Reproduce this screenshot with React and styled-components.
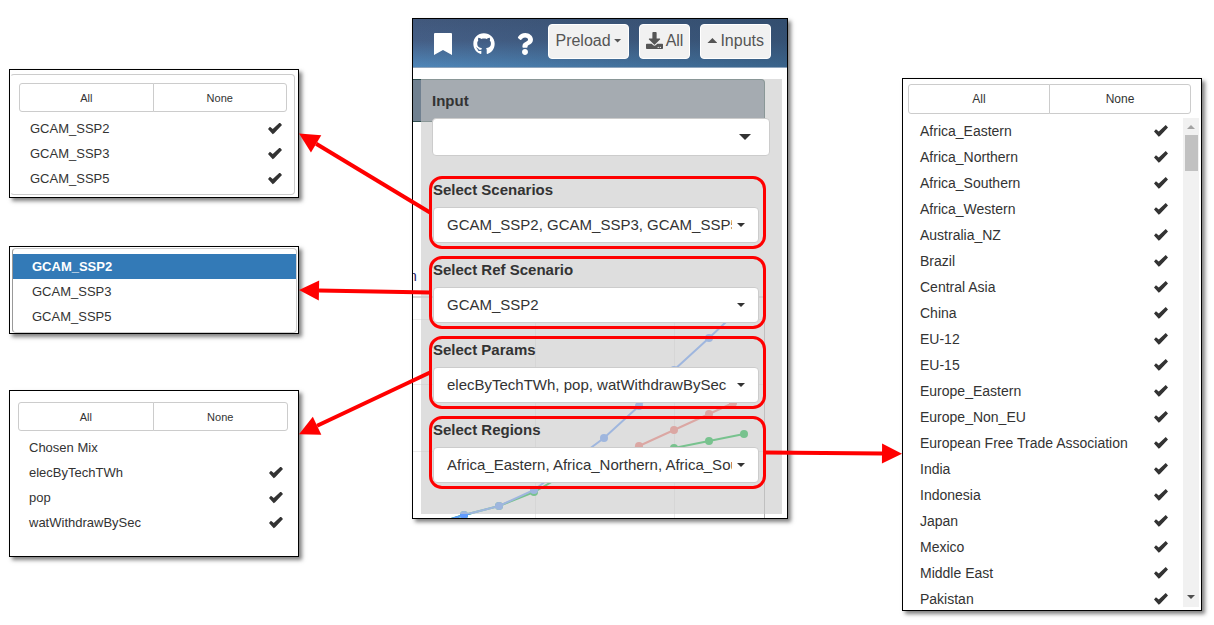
import React, { useLayoutEffect, useRef, useState } from 'react';
import styled, { createGlobalStyle, css } from 'styled-components';
import { FaGithub, FaQuestion, FaDownload } from 'react-icons/fa';

const GlobalStyle = createGlobalStyle`
  *, *::before, *::after { box-sizing: border-box; }
  body {
    margin: 0;
    background: #fff;
    color: #333;
    font: 14px/20px "Liberation Sans", Arial, sans-serif;
  }
  button, select, input { font: inherit; color: inherit; margin: 0; }
`;

const Figure = styled.main`
  position: relative;
  display: grid;
  grid-template-columns: 290fr 113px 376fr 114px 300fr;
  align-items: start;
  padding: 18px 12px 14px 9px;
  overflow: hidden;
`;

const LeftColumn = styled.div`
  grid-column: 1;
  display: flex;
  flex-direction: column;
  padding-top: 51px;
`;

const Window = styled.section`
  min-width: 0;
  background: #fff;
  border: 1px solid #000;
  box-shadow: 3px 3px 4px rgba(0, 0, 0, 0.5);
`;

const ScenarioWindow = styled(Window)`
  padding: 4px 3px 2px 0;
  margin-bottom: 48px;
`;

const RefWindow = styled(Window)`
  padding: 1px 1px 0 2px;
  margin-bottom: 56px;
`;

const ParamWindow = styled(Window)`
  padding: 11px 3px 21px 0;
`;

const RegionWindow = styled(Window)`
  grid-column: 5;
  margin-top: 60px;
  padding: 5px 2px 3px 0;
`;

const AppWindow = styled(Window)`
  grid-column: 3;
`;

const Menu = styled.div`
  ${(p) => p.$framed && css`
    border: 1px solid #ccc;
    border-left-color: ${p.$framed === 'full' ? '#999' : 'transparent'};
    border-radius: 4px;
    padding: ${p.$framed === 'full' ? '5px 0 3px' : '8px 0 3px'};
  `}
`;

const ButtonPair = styled.div`
  display: flex;
  margin: ${(p) => (p.$large ? '0 8px 4px 5px' : '0 7px 4px 8px')};
`;

const PairButton = styled.button`
  flex: 1;
  height: ${(p) => (p.$large ? 30 : 29)}px;
  padding: 0;
  background: #fff;
  border: 1px solid #ccc;
  font-size: ${(p) => (p.$large ? 12 : 11)}px;
  &:first-child { border-radius: 3px 0 0 3px; }
  &:last-child { border-radius: 0 3px 3px 0; margin-left: -1px; }
`;

const Option = styled.label`
  display: flex;
  align-items: center;
  justify-content: space-between;
  height: ${(p) => (p.$large ? 26 : 25)}px;
  padding: ${(p) => (p.$large ? '0 15px 0 17px' : '0 12px 0 19px')};
  font-size: ${(p) => (p.$large ? 14 : 13)}px;
  white-space: nowrap;
`;

const Check = styled.input`
  appearance: none;
  flex: none;
  width: 14px;
  height: 12px;
  background: transparent;
  clip-path: polygon(0 54%, 14% 36%, 34% 54%, 84% 0, 100% 20%, 44% 90%, 34% 98%);
  &:checked { background: #333; }
`;

const RefOption = styled(Option)`
  &:has(input:checked) {
    background: #337ab7;
    color: #fff;
    font-weight: bold;
  }
`;

const HiddenRadio = styled.input`
  appearance: none;
  width: 1px;
  height: 1px;
`;

const ScrollArea = styled.div`
  display: flex;
  height: 489px;
`;

const RegionList = styled.div`
  flex: 1;
  min-width: 0;
  overflow: hidden;
`;

const ScrollTrack = styled.div`
  display: flex;
  flex-direction: column;
  align-items: center;
  width: 16px;
  padding: 7px 0 8px;
  background: #f1f1f1;
`;

const ScrollThumb = styled.div`
  width: 13px;
  height: 36px;
  margin-top: 6px;
  margin-bottom: auto;
  background: #c1c1c1;
`;

const caretSizes = {
  small: css`width: 8px; height: 4px;`,
  medium: css`width: 10px; height: 5px;`,
  large: css`width: 12px; height: 6px;`,
};

const Caret = styled.span`
  ${(p) => caretSizes[p.$size || 'medium']}
  background: ${(p) => p.$color || '#333'};
  clip-path: ${(p) => (p.$up ? 'polygon(50% 0, 100% 100%, 0 100%)' : 'polygon(0 0, 100% 0, 50% 100%)')};
`;

const TopBar = styled.header`
  display: flex;
  align-items: flex-start;
  justify-content: space-between;
  height: 49px;
  padding: 5px 16px 0 19px;
  background:
    linear-gradient(to right, rgba(40, 70, 100, 0), rgba(40, 70, 100, 0.55)),
    linear-gradient(to bottom, #41587c 0%, #455f86 45%, #4f86b8 100%);
  border-bottom: 1px solid #8fa5bd;
`;

const IconNav = styled.nav`
  display: flex;
  align-items: center;
  gap: 19px;
  height: 39px;
`;

const IconLink = styled.a`
  display: flex;
  justify-content: center;
  width: 22px;
  color: #fff;
`;

const Tools = styled.div`
  display: flex;
  gap: 10px;
`;

const ToolButton = styled.button`
  display: flex;
  align-items: center;
  gap: 3px;
  height: 35px;
  padding: 0 6px 2px;
  border: 1px solid #fff;
  border-radius: 4px;
  background: #f1f1f1;
  color: #555;
  font-size: 16px;
`;

const Body = styled.div`
  position: relative;
  padding: 11px 5px 4px 8px;
  overflow: hidden;
`;

const TitleStrip = styled.div`
  position: absolute;
  top: 11px;
  left: 0;
  right: 22px;
  height: 43px;
  background: #708090;
  border: 1px solid #2f4f4f;
  border-left: 0;
  border-top-right-radius: 4px;
`;

const Chart = styled.svg`
  position: absolute;
  inset: 0;
  width: 100%;
  height: 100%;
`;

const InputPanel = styled.div`
  position: relative;
  padding: 12px 16px 25px 8px;
  background: rgba(200, 200, 200, 0.6);
`;

const FieldLabel = styled.label`
  display: block;
  font-size: 15px;
  font-weight: bold;
`;

const SelectBox = styled.div`
  position: relative;
  display: flex;
  align-items: center;
  margin-top: 7px;
`;

const Select = styled.select`
  appearance: none;
  width: 100%;
  height: ${(p) => (p.$big ? 38 : 36)}px;
  padding: 0 26px 0 13px;
  background: #fff;
  border: 1px solid #ccc;
  border-radius: 4px;
  font-size: 15px;
`;

const CaretSlot = styled.span`
  position: absolute;
  right: ${(p) => (p.$big ? 19 : 14)}px;
  display: flex;
  pointer-events: none;
`;

const SourceField = styled.div`
  margin: 0 -4px 20px 3px;
`;

const Fields = styled.div`
  display: flex;
  flex-direction: column;
  gap: 7px;
`;

const Field = styled.div`
  padding: 1px 4px 3px 1px;
  border: 3px solid #f00;
  border-radius: 13px;
`;

const ArrowLayer = styled.svg`
  position: absolute;
  inset: 0;
  width: 100%;
  height: 100%;
  pointer-events: none;
`;

const scenarios = ['GCAM_SSP2', 'GCAM_SSP3', 'GCAM_SSP5'];
const params = [
  ['Chosen Mix', false],
  ['elecByTechTWh', true],
  ['pop', true],
  ['watWithdrawBySec', true],
];
const regions = [
  'Africa_Eastern', 'Africa_Northern', 'Africa_Southern', 'Africa_Western',
  'Australia_NZ', 'Brazil', 'Central Asia', 'China', 'EU-12', 'EU-15',
  'Europe_Eastern', 'Europe_Non_EU', 'European Free Trade Association',
  'India', 'Indonesia', 'Japan', 'Mexico', 'Middle East', 'Pakistan',
];

const fields = [
  { id: 'scenarios', label: 'Select Scenarios', value: 'GCAM_SSP2, GCAM_SSP3, GCAM_SSP5' },
  { id: 'reference', label: 'Select Ref Scenario', value: 'GCAM_SSP2' },
  { id: 'params', label: 'Select Params', value: 'elecByTechTWh, pop, watWithdrawBySec' },
  { id: 'regions', label: 'Select Regions', value: 'Africa_Eastern, Africa_Northern, Africa_Southern' },
];

// Each arrow runs from a field to its window; `at` is the height on the window's edge.
const links = [
  { id: 'scenarios', at: 0.5, side: 'left' },
  { id: 'reference', at: 0.5, side: 'left' },
  { id: 'params', at: 0.265, side: 'left' },
  { id: 'regions', at: 0.705, side: 'right' },
];

function Arrow({ x1, y1, x2, y2 }) {
  const length = Math.hypot(x2 - x1, y2 - y1);
  const ux = (x2 - x1) / length;
  const uy = (y2 - y1) / length;
  const bx = x2 - ux * 20;
  const by = y2 - uy * 20;
  return (
    <g fill="#f00" stroke="#f00">
      <line x1={x1} y1={y1} x2={bx} y2={by} strokeWidth="4" />
      <polygon
        stroke="none"
        points={`${x2},${y2} ${bx - uy * 10},${by + ux * 10} ${bx + uy * 10},${by - ux * 10}`}
      />
    </g>
  );
}

function useArrowLines(root, nodes) {
  const [lines, setLines] = useState([]);
  useLayoutEffect(() => {
    const measure = () => {
      const base = root.current.getBoundingClientRect();
      setLines(
        links.map(({ id, at, side }) => {
          const from = nodes.current[`field-${id}`].getBoundingClientRect();
          const to = nodes.current[`window-${id}`].getBoundingClientRect();
          const left = side === 'left';
          return {
            id,
            x1: (left ? from.left + 1 : from.right - 1) - base.left,
            y1: from.top + from.height / 2 - base.top,
            x2: (left ? to.right : to.left) - base.left,
            y2: to.top + to.height * at - base.top,
          };
        })
      );
    };
    measure();
    const observer = new ResizeObserver(measure);
    observer.observe(root.current);
    return () => observer.disconnect();
  }, [root, nodes]);
  return lines;
}

function AllNone({ large }) {
  return (
    <ButtonPair $large={large}>
      <PairButton type="button" $large={large}>All</PairButton>
      <PairButton type="button" $large={large}>None</PairButton>
    </ButtonPair>
  );
}

function CheckOption({ label, checked = true, large }) {
  return (
    <Option $large={large}>
      {label}
      <Check type="checkbox" defaultChecked={checked} />
    </Option>
  );
}

function Series({ color, points }) {
  return (
    <g fill={color} stroke={color}>
      <polyline points={points.map((p) => p.join(',')).join(' ')} fill="none" strokeWidth="2" />
      {points.slice(1).map(([x, y]) => <circle key={x} cx={x} cy={y} r="4" stroke="none" />)}
    </g>
  );
}

function BackgroundChart() {
  return (
    <Chart viewBox="0 0 374 450" preserveAspectRatio="none" aria-hidden="true">
      <g stroke="#ebebeb">
        <path d="M0 251.5H351M0 316.5H351M0 383.5H351M122.5 229V450M261.5 229V450" fill="none" />
      </g>
      <path d="M0 229H351.500V450" fill="none" stroke="#b3b3b3" />
      <text x="-4" y="213" fontSize="14" fill="#1b1464">n</text>
      <Series color="#F8766D" points={[[156, 412], [191, 394], [226, 378], [261, 362], [296, 346], [320, 335]]} />
      <Series color="#00BA38" points={[[38, 451], [51, 447], [86, 438], [121, 424], [156, 404], [191, 392], [226, 385], [261, 380], [296, 373], [331, 366]]} />
      <Series color="#619CFF" points={[[38, 451], [51, 447], [86, 438], [121, 422], [156, 396], [191, 370], [226, 338], [261, 302], [296, 270], [331, 237]]} />
    </Chart>
  );
}

export default function App() {
  const root = useRef(null);
  const nodes = useRef({});
  const lines = useArrowLines(root, nodes);
  const track = (key) => (el) => { nodes.current[key] = el; };

  return (
    <>
      <GlobalStyle />
      <Figure ref={root}>
        <LeftColumn>
          <ScenarioWindow ref={track('window-scenarios')} aria-label="Scenarios">
            <Menu $framed="partial">
              <AllNone />
              {scenarios.map((s) => <CheckOption key={s} label={s} />)}
            </Menu>
          </ScenarioWindow>

          <RefWindow ref={track('window-reference')} aria-label="Reference scenario">
            <Menu $framed="full">
              {scenarios.map((s, i) => (
                <RefOption key={s}>
                  {s}
                  <HiddenRadio type="radio" name="reference" defaultChecked={i === 0} />
                </RefOption>
              ))}
            </Menu>
          </RefWindow>

          <ParamWindow ref={track('window-params')} aria-label="Params">
            <Menu>
              <AllNone />
              {params.map(([p, on]) => <CheckOption key={p} label={p} checked={on} />)}
            </Menu>
          </ParamWindow>
        </LeftColumn>

        <AppWindow aria-label="Application">
          <TopBar>
            <IconNav>
              <IconLink href="#bookmark" aria-label="Bookmark">
                <svg width="18" height="22" viewBox="0 0 18 22" fill="currentColor">
                  <path d="M1 0H17Q18 0 18 1V22L9 17L0 22V1Q0 0 1 0Z" />
                </svg>
              </IconLink>
              <IconLink href="#github" aria-label="GitHub"><FaGithub size={22} /></IconLink>
              <IconLink href="#help" aria-label="Help"><FaQuestion size={22} /></IconLink>
            </IconNav>
            <Tools>
              <ToolButton type="button">Preload<Caret $size="small" $color="#555" /></ToolButton>
              <ToolButton type="button"><FaDownload size={17} />All</ToolButton>
              <ToolButton type="button"><Caret $up $color="#555" />Inputs</ToolButton>
            </Tools>
          </TopBar>
          <Body>
            <TitleStrip />
            <BackgroundChart />
            <InputPanel>
              <SourceField>
                <FieldLabel htmlFor="input">Input</FieldLabel>
                <SelectBox>
                  <Select id="input" $big defaultValue=""><option value="" /></Select>
                  <CaretSlot $big><Caret $size="large" /></CaretSlot>
                </SelectBox>
              </SourceField>
              <Fields>
                {fields.map(({ id, label, value }) => (
                  <Field key={id} ref={track(`field-${id}`)}>
                    <FieldLabel htmlFor={id}>{label}</FieldLabel>
                    <SelectBox>
                      <Select id={id} defaultValue={value}><option>{value}</option></Select>
                      <CaretSlot><Caret $size="small" /></CaretSlot>
                    </SelectBox>
                  </Field>
                ))}
              </Fields>
            </InputPanel>
          </Body>
        </AppWindow>

        <RegionWindow ref={track('window-regions')} aria-label="Regions">
          <AllNone large />
          <ScrollArea>
            <RegionList>
              {regions.map((r) => <CheckOption key={r} label={r} large />)}
            </RegionList>
            <ScrollTrack>
              <Caret $size="small" $up $color="#a3a3a3" />
              <ScrollThumb />
              <Caret $size="small" $color="#505050" />
            </ScrollTrack>
          </ScrollArea>
        </RegionWindow>

        <ArrowLayer aria-hidden="true">
          {lines.map(({ id, ...line }) => <Arrow key={id} {...line} />)}
        </ArrowLayer>
      </Figure>
    </>
  );
}
